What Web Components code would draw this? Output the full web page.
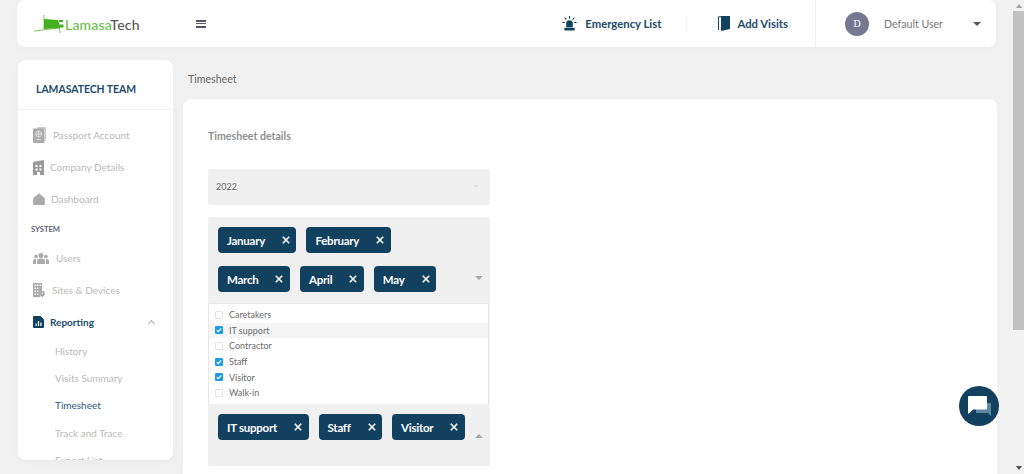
<!DOCTYPE html>
<html lang="en">
<head>
<meta charset="utf-8">
<title>Timesheet</title>
<style>
html, body { margin: 0; height: 474px; overflow: hidden; background: #f1f1f1; }
body { font-family: Lato, "Open Sans", sans-serif; }
</style>
</head>
<body>
<lt-app>
    <lt-header slot="header"></lt-header>
    <lt-sidebar slot="sidebar"></lt-sidebar>
    <lt-timesheet slot="main"></lt-timesheet>
</lt-app>
<lt-chat></lt-chat>

<script>
// ── Icons ───────────────────────────────────────────────
const ICONS = {
    passport: `<svg width="13" height="16" viewBox="0 0 13 16"><path fill="#ccc" d="M4 0h9v13h-1V2H4z"/><rect y="1.500" width="11.500" height="14.500" rx="1" fill="#aaa"/><circle cx="5.700" cy="7" r="3" fill="none" stroke="#eee" stroke-width=".8"/><path stroke="#eee" stroke-width=".8" d="M5.700 4v6M2.700 7h6M3.500 12.500h4.500"/></svg>`,
    company: `<svg width="11" height="15" viewBox="0 0 11 15"><path fill="#999" d="M0 2l11-2v15H7v-3H4v3H0z"/><path fill="#fff" d="M2.500 5h2v2h-2zM6.500 5h2v2h-2zM2.500 8.500h2v2h-2zM6.500 8.500h2v2h-2z"/></svg>`,
    home: `<svg width="12" height="12" viewBox="0 0 12 12"><path fill="#aaa" stroke="#aaa" stroke-linejoin="round" d="M6 .8l5.300 4.500v6.200H.7V5.300z"/></svg>`,
    users: `<svg width="16" height="11" viewBox="0 0 16 11"><g fill="#aaa"><circle cx="8" cy="2.500" r="2.500"/><circle cx="3" cy="3.500" r="1.800"/><circle cx="13" cy="3.500" r="1.800"/><path d="M4 11V8c0-1.500 1.500-2.500 4-2.500s4 1 4 2.500v3zM0 11V8c0-1.200 1-2 2.500-2H3.500C3 6.800 3 7.500 3 8v3zM16 11V8c0-1.200-1-2-2.500-2h-1c.5.800.5 1.500.5 2v3z"/></g></svg>`,
    sites: `<svg width="12" height="14" viewBox="0 0 12 14"><path fill="#aaa" d="M0 0h9v8H7.500v6H0z"/><path fill="#fff" d="M1.500 1.500h1.500V3H1.500zM4 1.500h1.500V3H4zM6.500 1.500H8V3H6.500zM1.500 4.500h1.500V6H1.500zM4 4.500h1.500V6H4zM1.500 7.500h1.500V9H1.500zM4 7.500h1.500V9H4zM1.500 10.500h1.500V12H1.500zM4 10.500h1.500V12H4z"/><path fill="#999" d="M9.500 8a2.400 2.400 0 0 1 2.400 2.400c0 1.500-2.400 3.600-2.400 3.600s-2.400-2.100-2.400-3.600A2.400 2.400 0 0 1 9.500 8z"/><circle cx="9.500" cy="10.400" r=".9" fill="#fff"/></svg>`,
    report: `<svg width="11" height="12" viewBox="0 0 11 12"><path fill="#12405f" d="M1 0h6.500L11 3.500V11a1 1 0 0 1-1 1H1a1 1 0 0 1-1-1V1a1 1 0 0 1 1-1z"/><path fill="#fff" d="M2.500 7.500h1.200V10H2.500zM4.900 5h1.200v5H4.900zM7.300 6.500h1.200V10H7.300z"/></svg>`,
    siren: `<svg width="15" height="15" viewBox="0 0 16 16"><g fill="#12405f"><path d="M4.500 12V8a3.500 3.500 0 0 1 7 0v4z"/><rect x="2.500" y="12.500" width="11" height="3" rx=".5"/></g><path stroke="#12405f" stroke-width="1.100" d="M8 0v2.800M2.800 1.800l1.900 2M13.200 1.800l-1.900 2M.5 7h2.500M13 7h2.500"/></svg>`,
    door: `<svg width="12" height="15" viewBox="0 0 12 15"><path fill="none" stroke="#12405f" d="M.5 14V.8H4"/><path fill="#12405f" d="M3 0h9v13l-9 2z"/></svg>`,
    chat: `<svg width="24" height="22" viewBox="0 0 24 22"><path fill="#5f87a3" d="M8 7h15v13l-3-3H8z"/><path fill="#fff" d="M1 0h17a1 1 0 0 1 1 1v11.500a1 1 0 0 1-1 1H5L1 17.500H0V1a1 1 0 0 1 1-1z"/></svg>`
};

// ── Shell ───────────────────────────────────────────────
class LtApp extends HTMLElement {
    connectedCallback() {
        const shadow = this.attachShadow({ mode: 'open' });
        shadow.innerHTML = `
<style>
:host { display: grid; grid-template-columns: 1fr 11px; height: 474px; overflow: hidden; color: #555; }
.page { padding: 0 17px; min-width: 0; }
.row { display: flex; gap: 10px; margin-top: 13px; align-items: flex-start; }
.col { flex: 1; min-width: 0; margin-right: -1px; }
.bar { display: flex; flex-direction: column; align-items: center; background: #f1f1f1; height: 474px; }
.arrow { width: 0; height: 0; border: 3px solid transparent; }
.up { border-bottom: 4px solid #a3a3a3; border-top-width: 0; margin: 4px 0 3px; }
.thumb { width: 100%; height: 319px; background: #c1c1c1; }
.down { border-top: 4px solid #505050; border-bottom-width: 0; margin-top: auto; margin-bottom: 4px; }
</style>
<div class="page">
    <slot name="header"></slot>
    <div class="row">
        <slot name="sidebar"></slot>
        <div class="col"><slot name="main"></slot></div>
    </div>
</div>
<div class="bar"><i class="arrow up"></i><div class="thumb"></div><i class="arrow down"></i></div>`;
    }
}
customElements.define('lt-app', LtApp);

// ── Header ──────────────────────────────────────────────
class LtHeader extends HTMLElement {
    connectedCallback() {
        const shadow = this.attachShadow({ mode: 'open' });
        shadow.innerHTML = `
<style>
:host { display: flex; align-items: center; height: 47px; background: #fff; border-radius: 8px; box-shadow: 0 2px 6px rgba(0,0,0,.03); font-family: Lato, sans-serif; }
.logo { display: flex; align-items: center; margin-left: 16px; width: 163px; flex: none; }
.logo svg { flex: none; margin-right: 1px; }
.logo span { font-size: 14px; font-weight: 500; color: #6cc04a; letter-spacing: .2px; margin-top: 1px; }
.logo b { font-weight: 500; color: #555; }
.burger { width: 10px; height: 8px; flex: none; border-top: 2px solid #50566b; border-bottom: 2px solid #50566b; box-sizing: border-box; position: relative; }
.burger::after { content: ""; display: block; height: 1.500px; margin-top: 1.250px; background: #50566b; }
.spacer { flex: 1; }
.link { display: flex; align-items: center; gap: 8px; font-size: 11.300px; font-weight: 700; color: #1d4a6b; }
.link.first { padding-right: 25px; border-right: 1px solid #f3f3f3; height: 20px; }
.link.second { padding-left: 31px; padding-right: 27px; gap: 7px; }
.user { display: flex; align-items: center; align-self: stretch; width: 181px; border-left: 1px solid #f0f0f0; box-sizing: border-box; padding-left: 29px; font-size: 10.600px; color: #777; }
.avatar { width: 24px; height: 24px; flex: none; border-radius: 50%; background: #76788f; color: #fff; font-size: 10px; display: grid; place-items: center; margin-right: 15px; font-family: "Liberation Serif", serif; }
.caret { width: 0; height: 0; border: 4px solid transparent; border-top-color: #555; border-bottom-width: 0; margin-left: 30px; }
</style>
<div class="logo">
    <svg width="31" height="18" viewBox="0 0 31 18"><path fill="#44b01f" d="M11 4l14 1 1.500 5 1 3-16.500 1z"/><path stroke="#44b01f" fill="none" stroke-width=".7" d="M1 16l25-3M11 0v14M26 8l1 10"/><path fill="#44b01f" d="M26 5h4v2h-4zM27 9.500h3.500v3H27z"/></svg>
    <span>Lamasa<b>Tech</b></span>
</div>
<div class="burger"></div>
<div class="spacer"></div>
<div class="link first">${ICONS.siren}<span>Emergency List</span></div>
<div class="link second">${ICONS.door}<span>Add Visits</span></div>
<div class="user"><div class="avatar">D</div><span>Default User</span><i class="caret"></i></div>`;
    }
}
customElements.define('lt-header', LtHeader);

// ── Sidebar ─────────────────────────────────────────────
class LtNavItem extends HTMLElement {
    connectedCallback() {
        const shadow = this.attachShadow({ mode: 'open' });
        const icon = this.getAttribute('icon');
        shadow.innerHTML = `
<style>
:host { display: flex; align-items: center; height: 32px; padding-left: 15px; font-size: 10px; color: #b9b9b9; }
:host([active]) { color: #1d4a6b; font-weight: 700; }
.icon { display: flex; justify-content: flex-start; margin-right: var(--gap, 7px); }
.chev { margin-left: auto; margin-right: 19px; width: 4px; height: 4px; border-left: 1px solid #aaa; border-top: 1px solid #aaa; transform: rotate(45deg); margin-top: 3px; }
</style>
<span class="icon">${ICONS[icon] || ''}</span><slot></slot>
${this.hasAttribute('open') ? '<i class="chev"></i>' : ''}`;
    }
}
customElements.define('lt-nav-item', LtNavItem);

class LtSubItem extends HTMLElement {
    connectedCallback() {
        this.attachShadow({ mode: 'open' }).innerHTML = `
<style>
:host { display: flex; align-items: center; height: 27.300px; padding-left: 37px; font-size: 10px; color: #b9b9b9; }
:host([active]) { color: #2a5a80; }
</style><slot></slot>`;
    }
}
customElements.define('lt-sub-item', LtSubItem);

class LtSidebar extends HTMLElement {
    connectedCallback() {
        const shadow = this.attachShadow({ mode: 'open' });
        shadow.innerHTML = `
<style>
:host { display: block; flex: none; width: 155px; height: 400px; margin-left: 1px; background: #fff; border-radius: 8px; overflow: hidden; box-sizing: border-box; box-shadow: 0 3px 8px rgba(0,0,0,.03); font-family: Lato, sans-serif; }
.team { height: 50px; box-sizing: border-box; padding: 22px 0 0 18px; font-size: 10.400px; font-weight: 700; color: #1d4a6b; border-bottom: 1px solid #f1f1f1; line-height: 14px; }
.list { padding-top: 9px; }
.sys { font-size: 7.600px; font-weight: 700; color: #5f6470; padding: 0 0 0 13px; height: 24px; line-height: 23px; margin-top: 3px; }
.sub { margin-top: -1px; }
</style>
<div class="team">LAMASATECH TEAM</div>
<div class="list">
    <lt-nav-item icon="passport" style="--gap:7px">Passport Account</lt-nav-item>
    <lt-nav-item icon="company" style="--gap:6px">Company Details</lt-nav-item>
    <lt-nav-item icon="home" style="--gap:6px">Dashboard</lt-nav-item>
    <div class="sys">SYSTEM</div>
    <lt-nav-item icon="users" style="--gap:7px">Users</lt-nav-item>
    <lt-nav-item icon="sites" style="--gap:7px">Sites &amp; Devices</lt-nav-item>
    <lt-nav-item icon="report" style="--gap:6px" active open>Reporting</lt-nav-item>
    <div class="sub">
        <lt-sub-item>History</lt-sub-item>
        <lt-sub-item>Visits Summary</lt-sub-item>
        <lt-sub-item active>Timesheet</lt-sub-item>
        <lt-sub-item>Track and Trace</lt-sub-item>
        <lt-sub-item>Export List</lt-sub-item>
    </div>
</div>`;
    }
}
customElements.define('lt-sidebar', LtSidebar);

// ── Form parts ──────────────────────────────────────────
class LtChip extends HTMLElement {
    connectedCallback() {
        this.attachShadow({ mode: 'open' }).innerHTML = `
<style>
:host { display: inline-flex; align-items: center; height: 26px; box-sizing: border-box; padding: 0 6.500px 0 9px; background: #12405f; color: #fff; border-radius: 4px; font-size: 11.500px; letter-spacing: -.25px; font-weight: 700; }
svg { margin-left: 17px; }
</style>
<slot></slot>
<svg width="8" height="8" viewBox="0 0 8 8"><path stroke="#fff" stroke-width="1.600" d="M.8.8l6.400 6.400M7.200.8L.8 7.200"/></svg>`;
    }
}
customElements.define('lt-chip', LtChip);

class LtMulti extends HTMLElement {
    connectedCallback() {
        const up = this.hasAttribute('up');
        this.attachShadow({ mode: 'open' }).innerHTML = `
<style>
:host { display: flex; align-items: flex-start; background: #f0f0f0; box-sizing: border-box; padding: 10px 7px 0 10px; }
.chips { flex: 1; display: flex; flex-wrap: wrap; gap: 13px 10px; padding-right: var(--chips-right, 0); }
.caret { width: 0; height: 0; border: 4px solid transparent; margin-top: var(--caret-top); }
.down { border-top: 4px solid #a9a9a9; border-bottom-width: 0; }
.up { border-bottom: 4px solid #a9a9a9; border-top-width: 0; }
</style>
<div class="chips"><slot></slot></div>
<i class="caret ${up ? 'up' : 'down'}"></i>`;
    }
}
customElements.define('lt-multi', LtMulti);

class LtOption extends HTMLElement {
    connectedCallback() {
        const on = this.hasAttribute('checked');
        this.attachShadow({ mode: 'open' }).innerHTML = `
<style>
:host { display: flex; align-items: center; height: 15.600px; padding-left: 6px; font-size: 9px; color: #6b6b6b; }
:host([hover]) { background: #f5f5f5; }
.box { width: 8px; height: 8px; box-sizing: border-box; margin-right: 6px; border-radius: 1px; border: 1px solid #e3e3e3; background: #fff; display: grid; place-items: center; }
.box.on { background: #1c9be6; border-color: #1c9be6; }
</style>
<span class="box ${on ? 'on' : ''}">${on ? '<svg width="6" height="6" viewBox="0 0 6 6"><path d="M.8 3.200l1.500 1.400L5.200 1.500" fill="none" stroke="#fff" stroke-width="1.200"/></svg>' : ''}</span><slot></slot>`;
    }
}
customElements.define('lt-option', LtOption);

// ── Timesheet page ──────────────────────────────────────
class LtTimesheet extends HTMLElement {
    connectedCallback() {
        const shadow = this.attachShadow({ mode: 'open' });
        shadow.innerHTML = `
<style>
:host { display: block; font-family: Lato, sans-serif; }
.crumb { height: 39px; box-sizing: border-box; padding: 13px 0 0 5px; font-size: 10.600px; line-height: 13px; color: #666; }
.card { background: #fff; border-radius: 8px 8px 0 0; padding: 29px 25px 0; height: 400px; box-sizing: border-box; }
h2 { margin: 0 0 25px; font-size: 10.600px; line-height: 16px; font-weight: 700; color: #8f8f8f; }
.form { width: 282px; }
.select { display: flex; align-items: center; justify-content: space-between; height: 36px; box-sizing: border-box; padding: 0 11px 2px 8px; margin-bottom: 12px; background: #f0f0f0; font-size: 9px; color: #666; border-radius: 2px; }
.select i { width: 0; height: 0; border: 3px solid transparent; border-top: 3px solid #ddd; border-bottom-width: 0; }
.wrap { background: #f0f0f0; }
.list { background: #fff; border: 1px solid #e6e6e6; border-bottom: 0; border-radius: 2px 2px 0 0; padding: 3px 0 3px; margin-right: 1px; height: 101px; box-sizing: border-box; }
lt-multi.top { height: 86px; --caret-top: 49px; --chips-right: 20px; border-radius: 2px 2px 0 0; }
lt-multi.bottom { height: 62px; --caret-top: 20px; border-radius: 0 0 2px 2px; }
</style>
<div class="crumb">Timesheet</div>
<div class="card">
    <h2>Timesheet details</h2>
    <div class="form">
        <div class="select"><span>2022</span><i></i></div>
        <lt-multi class="top">
            <lt-chip>January</lt-chip><lt-chip>February</lt-chip>
            <lt-chip>March</lt-chip><lt-chip>April</lt-chip><lt-chip>May</lt-chip>
        </lt-multi>
        <div class="wrap"><div class="list">
            <lt-option>Caretakers</lt-option>
            <lt-option checked hover>IT support</lt-option>
            <lt-option>Contractor</lt-option>
            <lt-option checked>Staff</lt-option>
            <lt-option checked>Visitor</lt-option>
            <lt-option>Walk-in</lt-option>
        </div></div>
        <lt-multi class="bottom" up>
            <lt-chip>IT support</lt-chip><lt-chip>Staff</lt-chip><lt-chip>Visitor</lt-chip>
        </lt-multi>
    </div>
</div>`;
    }
}
customElements.define('lt-timesheet', LtTimesheet);

// ── Chat button ─────────────────────────────────────────
class LtChat extends HTMLElement {
    connectedCallback() {
        this.attachShadow({ mode: 'open' }).innerHTML = `
<style>
:host { position: fixed; left: 959px; top: 386px; width: 40px; height: 40px; border-radius: 50%; background: #12405f; display: grid; place-items: center; }
svg { margin: 2px 0 0 1px; }
</style>${ICONS.chat}`;
    }
}
customElements.define('lt-chat', LtChat);
</script>
</body>
</html>
